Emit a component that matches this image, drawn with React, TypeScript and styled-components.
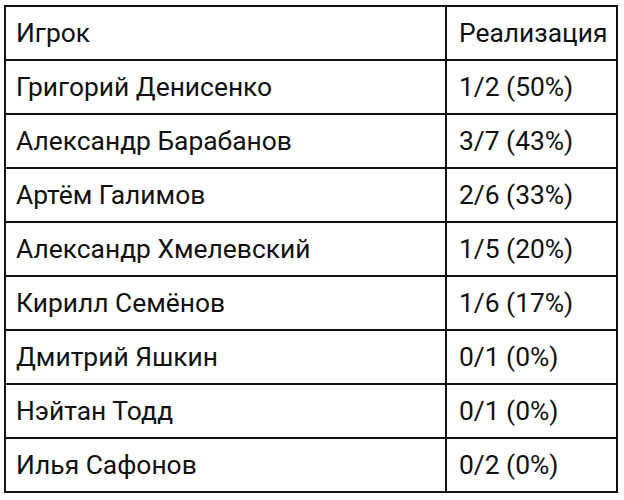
import React from "react";
import styled, { createGlobalStyle } from "styled-components";

const Global = createGlobalStyle`
  html, body { margin: 0; padding: 0; background: #fff; }
  body { font-family: Roboto, "Noto Sans", sans-serif; color: #111; }
`;

const Page = styled.div`
  padding: 5px 6px 0 4px;
`;

const Table = styled.table`
  width: 614px;
  border-collapse: collapse;
  border: 2px solid #111;
  font-size: 26.4px;
`;

const Cell = styled.td<{ $first?: boolean }>`
  border: 2px solid #111;
  height: 52px;
  padding: 0 0 0 ${(p) => (p.$first ? "10px" : "12px")};
  width: ${(p) => (p.$first ? "429px" : "auto")};
  text-align: left;
  vertical-align: middle;
  font-weight: 400;
  line-height: 30px;
  white-space: nowrap;
`;

const rows: [string, string][] = [
  ["Григорий Денисенко", "1/2 (50%)"],
  ["Александр Барабанов", "3/7 (43%)"],
  ["Артём Галимов", "2/6 (33%)"],
  ["Александр Хмелевский", "1/5 (20%)"],
  ["Кирилл Семёнов", "1/6 (17%)"],
  ["Дмитрий Яшкин", "0/1 (0%)"],
  ["Нэйтан Тодд", "0/1 (0%)"],
  ["Илья Сафонов", "0/2 (0%)"],
];

export default function App() {
  return (
    <Page>
      <Global />
      <Table>
        <thead>
          <tr>
            <Cell as="th" $first>Игрок</Cell>
            <Cell as="th">Реализация</Cell>
          </tr>
        </thead>
        <tbody>
          {rows.map(([n, v]) => (
            <tr key={n}>
              <Cell $first>{n}</Cell>
              <Cell>{v}</Cell>
            </tr>
          ))}
        </tbody>
      </Table>
    </Page>
  );
}
